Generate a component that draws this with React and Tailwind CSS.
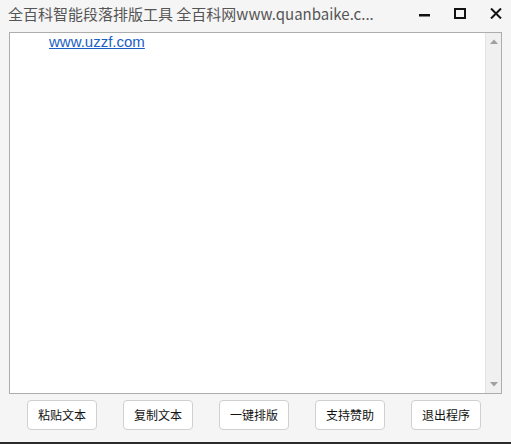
export default function App() {
    const buttons = ['粘贴文本', '复制文本', '一键排版', '支持赞助', '退出程序'];

    return (
        <div className="w-[511px] h-[444px] bg-[#f5f5f5] flex flex-col overflow-hidden font-['Liberation_Sans','Noto_Sans_CJK_SC',sans-serif]">
            {/* Title bar */}
            <div className="h-[32px] flex items-center pl-[8px] shrink-0">
                <div className="flex-1 text-[15px] text-[#555555] leading-none whitespace-nowrap font-['Noto_Sans_CJK_SC','Liberation_Sans',sans-serif] -mt-[5px]">
                    全百科智能段落排版工具 全百科网www.quanbaike.c...
                </div>
                <div className="flex items-start h-full pt-[8px]">
                    <svg width="12" height="11" viewBox="0 0 12 11" className="mr-[23px]">
                        <rect x="0" y="6" width="11" height="2.5" fill="#111" />
                    </svg>
                    <svg width="12" height="11" viewBox="0 0 12 11" className="mr-[24px]">
                        <rect x="1" y="1" width="10" height="9" fill="none" stroke="#111" strokeWidth="2" />
                    </svg>
                    <svg width="12" height="11" viewBox="0 0 12 11" className="mr-[9px]">
                        <path d="M1 0.5 L11 10.5 M11 0.5 L1 10.5" stroke="#111" strokeWidth="2" />
                    </svg>
                </div>
            </div>

            {/* Text area */}
            <div className="mx-[9px] h-[362px] border border-[#adadad] bg-white flex shrink-0">
                <div className="flex-1 pl-[39px]">
                    <a className="block w-fit text-[15px] text-[#1a5fc4] underline leading-[18px]">www.uzzf.com</a>
                </div>
                <div className="w-[16px] bg-[#f0f0f0] border-l border-[#e3e3e3] flex flex-col justify-between items-center py-[6px]">
                    <svg width="8" height="5" viewBox="0 0 8 5">
                        <path d="M0 5 L4 0.5 L8 5 Z" fill="#a0a0a0" />
                    </svg>
                    <svg width="8" height="5" viewBox="0 0 8 5">
                        <path d="M0 0 L4 4.5 L8 0 Z" fill="#a0a0a0" />
                    </svg>
                </div>
            </div>

            {/* Buttons */}
            <div className="flex gap-[26px] pl-[27px] mt-[6px] shrink-0">
                {buttons.map((b) => (
                    <button
                        key={b}
                        className="w-[70px] h-[30px] bg-white border border-[#d0d0d0] rounded-[4px] text-[12px] text-[#111] font-['Noto_Sans_CJK_SC',sans-serif]"
                    >
                        {b}
                    </button>
                ))}
            </div>

            <div className="flex-1" />
            <div className="h-[2px] bg-[#2a2a2a] shrink-0" />
        </div>
    );
}
